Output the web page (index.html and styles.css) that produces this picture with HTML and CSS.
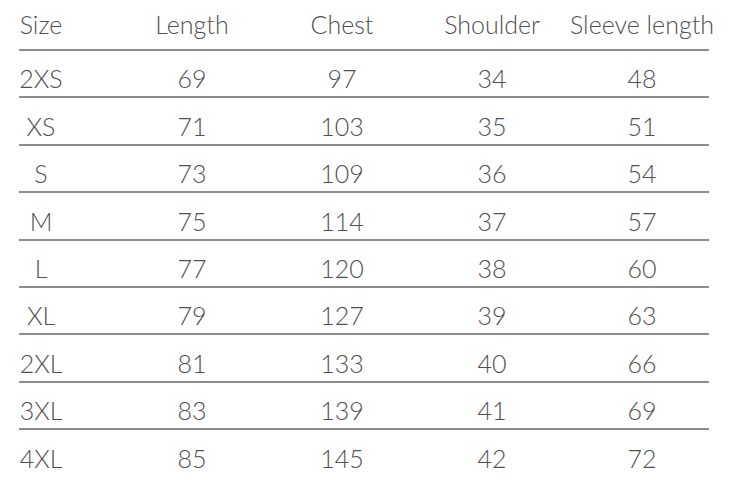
FILE: index.html
```html
<!DOCTYPE html>
<html lang="en">
<head>
<meta charset="utf-8">
<title>Size chart</title>
<link rel="stylesheet" href="styles.css">
</head>
<body>
<div class="chart">
  <div class="row head">
    <span class="cell size">Size</span><span class="cell">Length</span><span class="cell">Chest</span><span class="cell">Shoulder</span><span class="cell">Sleeve length</span>
  </div>
  <div class="row"><span class="cell size">2XS</span><span class="cell">69</span><span class="cell">97</span><span class="cell">34</span><span class="cell">48</span></div>
  <div class="row"><span class="cell size">XS</span><span class="cell">71</span><span class="cell">103</span><span class="cell">35</span><span class="cell">51</span></div>
  <div class="row"><span class="cell size">S</span><span class="cell">73</span><span class="cell">109</span><span class="cell">36</span><span class="cell">54</span></div>
  <div class="row"><span class="cell size">M</span><span class="cell">75</span><span class="cell">114</span><span class="cell">37</span><span class="cell">57</span></div>
  <div class="row"><span class="cell size">L</span><span class="cell">77</span><span class="cell">120</span><span class="cell">38</span><span class="cell">60</span></div>
  <div class="row"><span class="cell size">XL</span><span class="cell">79</span><span class="cell">127</span><span class="cell">39</span><span class="cell">63</span></div>
  <div class="row"><span class="cell size">2XL</span><span class="cell">81</span><span class="cell">133</span><span class="cell">40</span><span class="cell">66</span></div>
  <div class="row"><span class="cell size">3XL</span><span class="cell">83</span><span class="cell">139</span><span class="cell">41</span><span class="cell">69</span></div>
  <div class="row last"><span class="cell size">4XL</span><span class="cell">85</span><span class="cell">145</span><span class="cell">42</span><span class="cell">72</span></div>
</div>
</body>
</html>
```
FILE: styles.css
```css
html, body {
  margin: 0;
  padding: 0;
  background: #ffffff;
}

.chart {
  width: 690px;
  margin-left: 19px;
  font-family: "Lato", "Noto Sans", sans-serif;
  font-weight: 300;
  font-size: 25px;
  color: #505050;
}

.row {
  display: grid;
  grid-template-columns: 98px repeat(4, 150px);
  align-items: end;
  height: 45.4px;
  border-bottom: 2px solid #8c8c8c;
}

.row.head {
  height: 49px;
}

.row.last {
  border-bottom: none;
}

.cell {
  justify-self: center;
  white-space: nowrap;
  line-height: 30px;
  padding-bottom: 3px;
}

.head .cell {
  padding-bottom: 10px;
}

.cell.size {
  justify-self: start;
  width: 44px;
  display: flex;
  justify-content: center;
}
```
